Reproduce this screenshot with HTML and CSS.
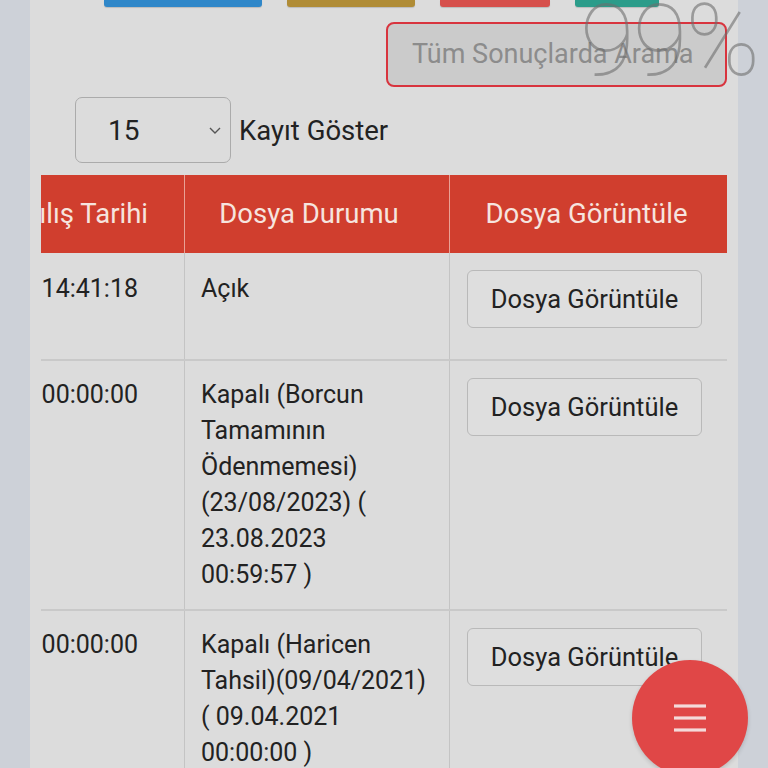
FILE: index.html
```html
<!DOCTYPE html>
<html lang="tr">
<head>
<meta charset="utf-8">
<title>Dosyalar</title>
<link rel="stylesheet" href="styles.css">
</head>
<body>
<div class="panel">
  <div class="topbtns">
    <span class="tb tb-blue"></span>
    <span class="tb tb-gold"></span>
    <span class="tb tb-red"></span>
    <span class="tb tb-teal"></span>
  </div>
  <div class="search-row">
    <input class="search" type="text" placeholder="Tüm Sonuçlarda Arama">
  </div>
  <div class="length-row">
    <div class="select">
      <span class="sel-val">15</span>
      <svg class="chev" width="14" height="10" viewBox="0 0 14 10"><path d="M2 3 L7 8 L12 3" fill="none" stroke="#555" stroke-width="1.4"/></svg>
    </div>
    <span class="len-label">Kayıt Göster</span>
  </div>
  <div class="scroll">
    <table class="grid">
      <colgroup><col class="c1"><col class="c2"><col class="c3"></colgroup>
      <thead>
        <tr>
          <th class="first">Dosya Açılış Tarihi</th>
          <th class="status">Dosya Durumu</th>
          <th>Dosya Görüntüle</th>
        </tr>
      </thead>
      <tbody>
        <tr>
          <td class="first">23.08.2023 14:41:18</td>
          <td>Açık</td>
          <td><button class="view">Dosya Görüntüle</button></td>
        </tr>
        <tr>
          <td class="first">15.03.2019 00:00:00</td>
          <td>Kapalı (Borcun Tamamının Ödenmemesi) (23/08/2023) ( 23.08.2023<br>00:59:57 )</td>
          <td><button class="view">Dosya Görüntüle</button></td>
        </tr>
        <tr>
          <td class="first">12.11.2018 00:00:00</td>
          <td>Kapalı (Haricen Tahsil)(09/04/2021) ( 09.04.2021<br>00:00:00 )</td>
          <td><button class="view">Dosya Görüntüle</button></td>
        </tr>
      </tbody>
    </table>
  </div>
</div>
<div class="zoom-ind">99%</div>
<button class="fab" aria-label="Menü">
  <svg width="36" height="30" viewBox="0 0 36 30"><g stroke="#f4dada" stroke-width="3.2"><line x1="2" y1="3" x2="34" y2="3"/><line x1="2" y1="15" x2="34" y2="15"/><line x1="2" y1="27" x2="34" y2="27"/></g></svg>
</button>
</body>
</html>
```
FILE: styles.css
```css
html, body {
  margin: 0;
  padding: 0;
  background: #cdd1d8;
  font-family: Roboto, "Noto Sans", "Liberation Sans", sans-serif;
  color: #222;
  overflow: hidden;
  height: 768px;
}

.panel {
  margin: 0 30px;
  background: #dcdcdc;
  min-height: 768px;
  padding: 0 11px;
}

.topbtns {
  display: flex;
  gap: 25px;
  padding-left: 63px;
  height: 7px;
}
.tb {
  display: block;
  height: 7px;
  border-radius: 0 0 3px 3px;
  box-shadow: 0 1px 1px rgba(0,0,0,0.15);
}
.tb-blue { width: 158px; background: #2f87c9; }
.tb-gold { width: 128px; background: #b08c36; }
.tb-red  { width: 110px; background: #d6504c; }
.tb-teal { width: 84px;  background: #2b9c8a; }

.search-row {
  display: flex;
  justify-content: flex-end;
  margin-top: 15px;
}
.search {
  box-sizing: border-box;
  width: 341px;
  height: 65px;
  border: 2px solid #d8343e;
  border-radius: 8px;
  background: #cbcbcb;
  padding: 0 0 2px 24px;
  font-family: Roboto, "Noto Sans", sans-serif;
  font-size: 27px;
  color: #555;
  outline: none;
}
.search::placeholder { color: #8c8c8c; }

.length-row {
  display: flex;
  align-items: center;
  gap: 8px;
  margin-top: 10px;
  padding-left: 34px;
}
.select {
  box-sizing: border-box;
  width: 156px;
  height: 66px;
  border: 1.5px solid #ababab;
  border-radius: 7px;
  display: flex;
  align-items: center;
  justify-content: space-between;
  padding: 0 8px 0 32px;
}
.sel-val { font-size: 28px; color: #222; }
.chev { display: block; }
.len-label { font-size: 27.5px; color: #222; }

.scroll {
  margin-top: 12px;
  overflow: hidden;
}
.grid {
  table-layout: fixed;
  border-collapse: collapse;
  width: 843px;
  margin-left: -157px;
  font-size: 25px;
  line-height: 36px;
}
.c1 { width: 300px; }
.c2 { width: 265px; }
.c3 { width: 278px; }

.grid th {
  background: #d03e2e;
  color: #f6e4df;
  font-weight: 400;
  font-size: 27.5px;
  height: 78px;
  padding: 0 4px 0 0;
  text-align: center;
  border-left: 1px solid #e9a195;
  white-space: nowrap;
  box-sizing: border-box;
}
.grid th.status { padding-right: 16px; }
.grid th.first {
  text-align: right;
  padding-right: 36px;
}
.grid td {
  vertical-align: top;
  padding: 16px 16px 16px;
  border-left: 1px solid #c4c4c4;
  border-top: 2px solid #c9c9c9;
  text-align: left;
}
.grid tbody tr:first-child td {
  border-top: none;
  padding-top: 18px;
  padding-bottom: 14px;
}
.grid td.first {
  text-align: right;
  padding-right: 46px;
  white-space: nowrap;
}
.grid tr > :last-child { border-right: 1px solid #c4c4c4; }
.grid thead tr > :last-child { border-right: 1px solid #e9a195; }

.grid td .view {
  margin: 1px 0 15px 1px;
}
.grid tbody tr:first-child td .view {
  margin: -1px 0 17px 1px;
}
.view {
  display: block;
  box-sizing: border-box;
  width: 235px;
  height: 58px;
  background: #dedede;
  border: 1.5px solid #b9b9b9;
  border-radius: 6px;
  font-family: Roboto, "Noto Sans", sans-serif;
  font-size: 25.5px;
  color: #222;
  padding: 0;
}

.zoom-ind {
  position: fixed;
  left: 580px;
  top: -18px;
  font-family: Roboto, "Noto Sans", sans-serif;
  font-weight: 100;
  font-size: 100px;
  color: rgba(110,110,110,0.6);
  letter-spacing: -2px;
  pointer-events: none;
}

.fab {
  position: fixed;
  left: 632px;
  top: 660px;
  width: 116px;
  height: 116px;
  border-radius: 50%;
  border: none;
  background: #e04747;
  display: flex;
  align-items: center;
  justify-content: center;
  padding: 0;
  box-shadow: 0 2px 4px rgba(0,0,0,0.15);
}
.fab svg { display: block; }
```
